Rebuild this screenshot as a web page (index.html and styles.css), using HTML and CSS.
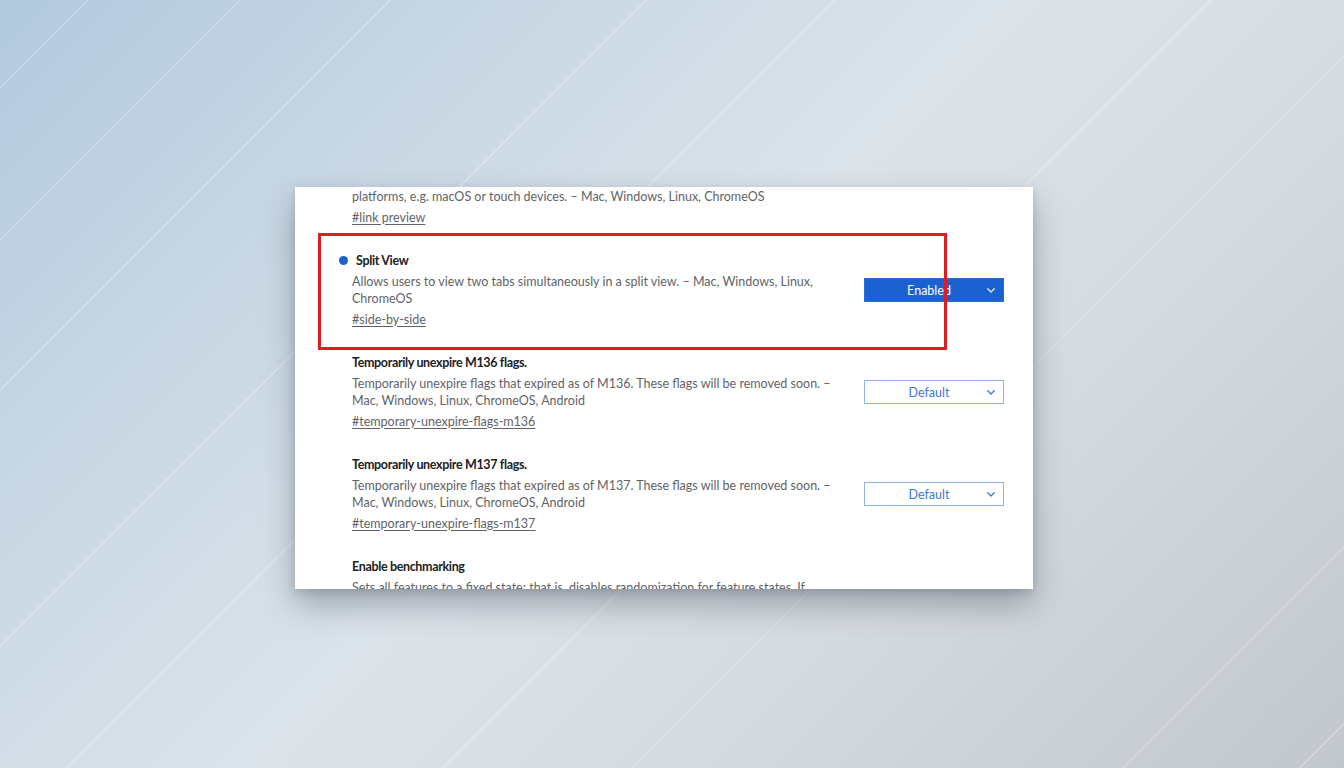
FILE: index.html
```html
<!DOCTYPE html>
<html lang="en">
<head>
<meta charset="utf-8">
<title>Chrome flags – Split View</title>
<link rel="stylesheet" href="styles.css">
</head>
<body>
<div class="stage">
  <div class="card">
    <div class="list">
      <div class="entry">
        <div class="entry-text">
          <div class="title">Link Preview</div>
          <div class="desc">Enables link preview, which shows a preview of a linked page in a small window on supported<br>platforms, e.g. macOS or touch devices. – Mac, Windows, Linux, ChromeOS</div>
          <a class="link">#link preview</a>
        </div>
      </div>

      <div class="entry highlighted">
        <div class="entry-text">
          <div class="title modified">Split View</div>
          <div class="desc">Allows users to view two tabs simultaneously in a split view. – Mac, Windows, Linux, ChromeOS</div>
          <a class="link">#side-by-side</a>
        </div>
        <div class="select enabled">
          <span class="select-label">Enabled</span>
          <svg class="chev" viewBox="0 0 8 5" width="8" height="5"><polyline points="0.8,0.8 4,4 7.2,0.8" fill="none" stroke="currentColor" stroke-width="1.3" stroke-linecap="round" stroke-linejoin="round"/></svg>
        </div>
        <div class="annot"></div>
      </div>

      <div class="entry">
        <div class="entry-text">
          <div class="title">Temporarily unexpire M136 flags.</div>
          <div class="desc">Temporarily unexpire flags that expired as of M136. These flags will be removed soon. – Mac, Windows, Linux, ChromeOS, Android</div>
          <a class="link">#temporary-unexpire-flags-m136</a>
        </div>
        <div class="select">
          <span class="select-label">Default</span>
          <svg class="chev" viewBox="0 0 8 5" width="8" height="5"><polyline points="0.8,0.8 4,4 7.2,0.8" fill="none" stroke="currentColor" stroke-width="1.3" stroke-linecap="round" stroke-linejoin="round"/></svg>
        </div>
      </div>

      <div class="entry">
        <div class="entry-text">
          <div class="title">Temporarily unexpire M137 flags.</div>
          <div class="desc">Temporarily unexpire flags that expired as of M137. These flags will be removed soon. – Mac, Windows, Linux, ChromeOS, Android</div>
          <a class="link">#temporary-unexpire-flags-m137</a>
        </div>
        <div class="select">
          <span class="select-label">Default</span>
          <svg class="chev" viewBox="0 0 8 5" width="8" height="5"><polyline points="0.8,0.8 4,4 7.2,0.8" fill="none" stroke="currentColor" stroke-width="1.3" stroke-linecap="round" stroke-linejoin="round"/></svg>
        </div>
      </div>

      <div class="entry">
        <div class="entry-text">
          <div class="title">Enable benchmarking</div>
          <div class="desc">Sets all features to a fixed state; that is, disables randomization for feature states. If '(Default)' is selected, the feature state is randomized as usual. This is meant for benchmarking, so that results are reproducible from run to run. – Mac, Windows, Linux, ChromeOS, Android</div>
          <a class="link">#enable-benchmarking</a>
        </div>
        <div class="select">
          <span class="select-label">Default</span>
          <svg class="chev" viewBox="0 0 8 5" width="8" height="5"><polyline points="0.8,0.8 4,4 7.2,0.8" fill="none" stroke="currentColor" stroke-width="1.3" stroke-linecap="round" stroke-linejoin="round"/></svg>
        </div>
      </div>
    </div>
  </div>
</div>
</body>
</html>
```

FILE: styles.css
```css
html, body {
  margin: 0;
  height: 100%;
}

body {
  width: 1344px;
  height: 768px;
  overflow: hidden;
  font-family: Lato, "Liberation Sans", sans-serif;
  background:
    linear-gradient(135deg,
      transparent 0 61.5px, rgba(255,255,255,.3) 61.5px 62.5px,
      transparent 62.5px 169.5px, rgba(255,255,255,.3) 169.5px 170.5px,
      transparent 170.5px 275.5px, rgba(255,255,255,.28) 275.5px 276.5px,
      transparent 276.5px 456.5px, rgba(255,255,255,.28) 456.5px 457.5px,
      transparent 457.5px 589.5px, rgba(255,255,255,.28) 589.5px 590.5px,
      transparent 590.5px 855.5px, rgba(255,255,255,.28) 855.5px 856.5px,
      transparent 856.5px 989.5px, rgba(255,255,255,.28) 989.5px 990.5px,
      transparent 990.5px 1336.5px, rgba(255,255,255,.3) 1336.5px 1337.5px,
      transparent 1337.5px 1461.5px, rgba(255,255,255,.3) 1461.5px 1462.5px,
      transparent 1462.5px),
    linear-gradient(135deg, #b2c9de 0%, #c8d7e4 24%, #dbe3ea 48%, #d5dae0 70%, #c2c7ce 100%);
}

.stage {
  padding: 187px 0 0 295px;
}

.card {
  width: 738px;
  height: 402px;
  background: #ffffff;
  overflow: hidden;
  box-shadow: 0 16px 30px rgba(45, 52, 64, 0.34), 0 3px 8px rgba(45, 52, 64, 0.16);
}

.list {
  margin-top: -50px;
}

.entry {
  position: relative;
  display: flex;
  align-items: center;
  gap: 24px;
  padding: 12.5px 29px 12.5px 57px;
}

.entry-text {
  flex: 1;
  min-width: 0;
  display: flex;
  flex-direction: column;
  align-items: flex-start;
}

.title {
  position: relative;
  font-size: 12.5px;
  line-height: 18px;
  font-weight: 700;
  letter-spacing: -0.35px;
  color: #202124;
}

.title.modified {
  padding-left: 4px;
}

.title.modified::before {
  content: "";
  position: absolute;
  left: -13.5px;
  top: 4.5px;
  width: 9px;
  height: 9px;
  border-radius: 50%;
  background: #1a62d6;
}

.desc {
  margin-top: 3px;
  font-size: 12.5px;
  line-height: 17.5px;
  color: #5f6368;
}

.link {
  margin-top: 3px;
  font-size: 12.5px;
  line-height: 18px;
  color: #5f6368;
  text-decoration: underline;
  text-underline-offset: 2px;
}

.select {
  flex: none;
  box-sizing: border-box;
  width: 140px;
  height: 24px;
  display: flex;
  align-items: center;
  padding: 0 8px 0 6px;
  border: 1px solid #8db2ea;
  background: #ffffff;
  color: #3a77d6;
  font-size: 12.5px;
}

.select-label {
  flex: 1;
  text-align: center;
}

.select.enabled {
  background: #1b61d1;
  border-color: #2a6cd6;
  color: #ffffff;
}

.select.enabled .chev {
  color: #e6eefb;
}

.chev {
  display: block;
  flex: none;
}

.annot {
  position: absolute;
  left: 23px;
  top: -6px;
  width: 629px;
  height: 117px;
  box-sizing: border-box;
  border: 3px solid #e31b23;
  pointer-events: none;
}
```
